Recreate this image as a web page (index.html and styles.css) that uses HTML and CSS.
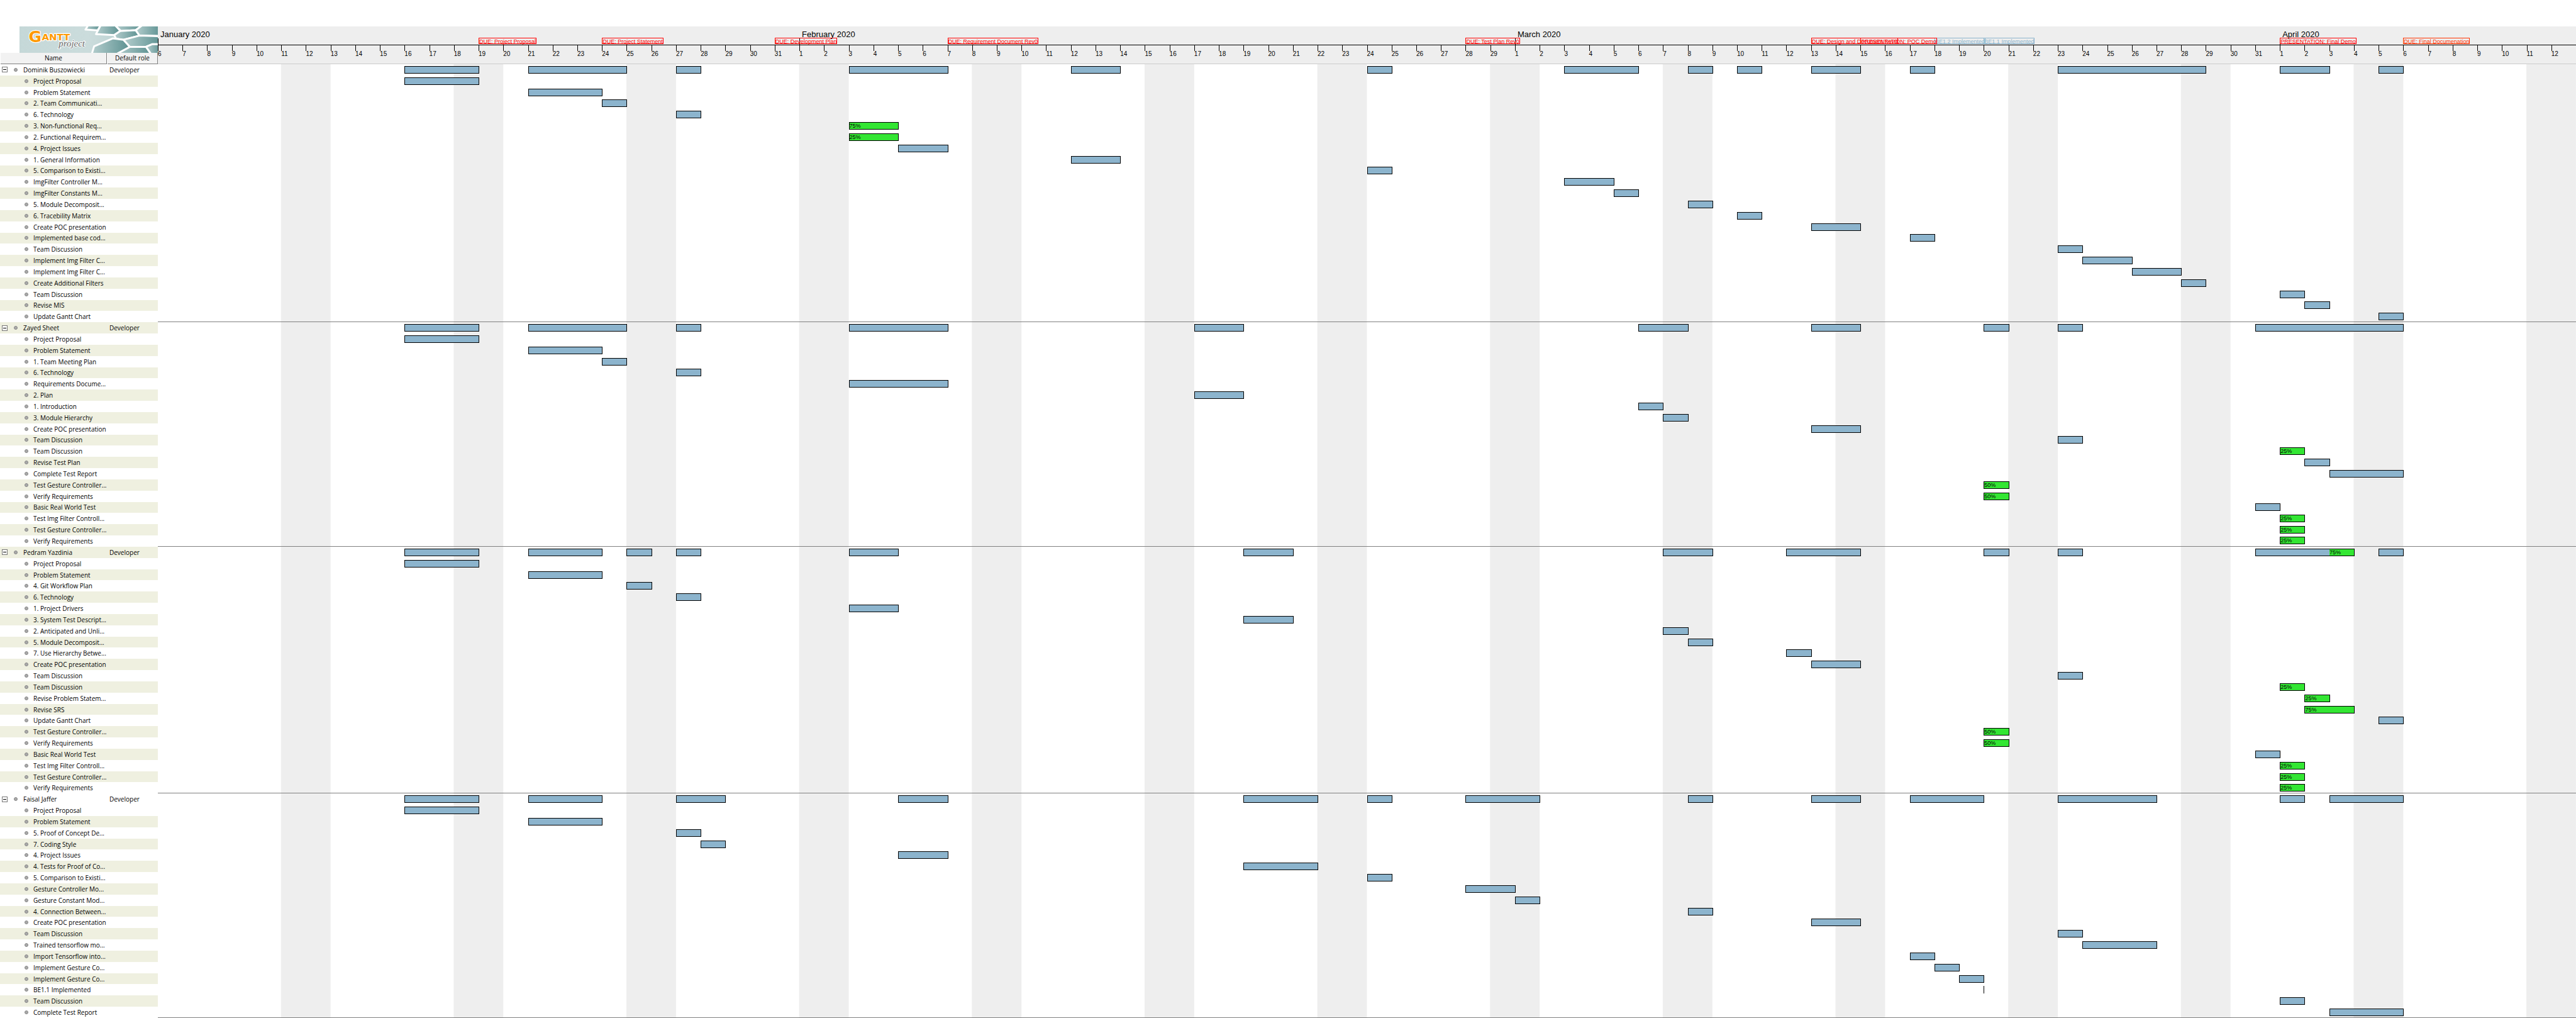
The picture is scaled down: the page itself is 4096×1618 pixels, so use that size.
FILE: index.html
```html
<!DOCTYPE html>
<html lang="en">
<head>
<meta charset="utf-8">
<title>GanttProject - Resources Chart</title>
<link rel="stylesheet" href="styles.css">
</head>
<body>
<table class="chart">
  <thead class="head">
    <tr class="head-row">
      <th class="brand" colspan="2" scope="colgroup">
        <svg class="logo" viewBox="15 21 738 141" preserveAspectRatio="none" role="img" aria-label="GanttProject">
          <defs>
            <linearGradient id="sky" x1="0" y1="0" x2="1" y2="0">
              <stop offset="0" stop-color="#c5d8d8"/>
              <stop offset="0.5" stop-color="#cbdcdc"/>
              <stop offset="1" stop-color="#b0caca"/>
            </linearGradient>
            <linearGradient id="cell" x1="0" y1="0" x2="1" y2="0">
              <stop offset="0" stop-color="#b4cdcd"/>
              <stop offset="1" stop-color="#5c9191"/>
            </linearGradient>
          </defs>
          <rect x="15" y="21" width="738" height="141" fill="url(#sky)"/>
          <g fill="url(#cell)" stroke="#fff" stroke-width="10" stroke-linejoin="round">
            <path d="M382 13L367 38L432 42L449 13Z"/>
            <path d="M449 13L423 62L520 67L553 45L524 13Z"/>
            <path d="M524 13L555 45L635 41L672 13Z"/>
            <path d="M520 67L553 45L635 41L655 70L570 92L530 86Z"/>
            <path d="M635 41L672 13L770 13L770 72L655 70Z"/>
            <path d="M413 127L512 85L570 92L604 130L530 170L400 170Z"/>
            <path d="M570 92L655 70L770 74L770 116L722 116L690 130L604 130Z"/>
            <path d="M530 170L604 130L690 130L718 170Z"/>
            <path d="M690 130L722 116L770 116L770 170L718 170Z"/>
          </g>
          <g class="logo-word">
            <text class="logo-initial" x="64" y="106">G</text>
            <text class="logo-rest" x="134" y="95">ANTT</text>
          </g>
          <text class="logo-sub" x="224" y="127">project</text>
        </svg>
      </th>
      <th class="timeline-head" rowspan="2" scope="col">
        <div class="scale" id="scale"></div>
      </th>
    </tr>
    <tr class="head-row">
      <th class="col-head col-name" scope="col">Name</th>
      <th class="col-head col-role" scope="col">Default role</th>
    </tr>
  </thead>
  <tbody class="rows" id="rows"></tbody>
</table>
<script src="chart.js"></script>
</body>
</html>
```
FILE: styles.css
```css
* {
  box-sizing: border-box;
}

body {
  margin: 0;
  background: #fff;
  color: #000;
  font-family: "Open Sans", "Noto Sans", sans-serif;
  font-size: 10px;
  line-height: 16px;
}

.chart {
  display: grid;
  grid-template-columns: 170px 81px minmax(0, 1fr);
  grid-template-rows: auto 1fr;
  min-height: 100vh;
  padding-top: 42px;
}

/* ---- header ---- */

.head {
  display: grid;
  grid-column: 1 / -1;
  grid-template-columns: subgrid;
  grid-template-rows: 42px 18px;
}

.head-row {
  display: contents;
}

th,
td {
  padding: 0;
  font-weight: normal;
  text-align: left;
}

.brand {
  display: flex;
  grid-column: 1 / 3;
  padding-left: 31px;
}

.logo {
  width: 100%;
  height: 42px;
}

.logo-word {
  fill: #ff9900;
  stroke: #fff;
  stroke-width: 8px;
  stroke-linejoin: round;
  paint-order: stroke;
  font-family: "DejaVu Sans", sans-serif;
  font-weight: bold;
}

.logo-initial {
  font-size: 84px;
}

.logo-rest {
  font-size: 50px;
}

.logo-sub {
  fill: #666;
  stroke: #fff;
  stroke-width: 6px;
  paint-order: stroke;
  font-family: "Liberation Serif", serif;
  font-size: 50px;
  font-style: italic;
}

.col-head {
  grid-row: 2;
  background: #f2f2f2;
  border-right: 1px solid #7f7f7f;
  border-bottom: 1px solid #7f7f7f;
  margin-left: 1px;
  text-align: center;
}

.timeline-head {
  grid-row: 1 / 3;
  grid-column: 3;
  background: #eee;
  border-bottom: 1px solid #ccc;
  font-family: "Liberation Sans", Arial, sans-serif;
}

.scale {
  display: grid;
  grid-template-columns: repeat(98, minmax(0, 1fr));
  grid-template-rows: 18px 2px 10px 29px;
}

.month {
  grid-row: 1;
  padding: 5px 0 0 4px;
  font-size: 13px;
  white-space: nowrap;
}

.month-tick {
  grid-row: 3;
  border-left: 1px solid #000;
  margin-top: -1px;
}

.due {
  grid-row: 2 / 4;
  justify-self: start;
  height: 10px;
  border: 1px solid currentColor;
  margin-top: 0;
  color: #f00;
  font-size: 9px;
  line-height: 10px;
  white-space: nowrap;
}

.due-task {
  color: #8cb4cd;
}

.due-final {
  color: #ff3300;
}

.axis {
  grid-row: 3;
  grid-column: 1 / -1;
  align-self: end;
  height: 1px;
  background: #000;
}

.day {
  grid-row: 4;
  font-size: 10px;
  line-height: 10px;
  text-indent: 2px;
}

.day::before {
  content: "";
  display: block;
  width: 1px;
  height: 9px;
  background: #000;
}

/* ---- rows ---- */

.rows {
  display: grid;
  grid-column: 1 / -1;
  grid-template-columns: subgrid;
  grid-auto-rows: minmax(17px, 1fr);
}

.row {
  display: grid;
  grid-column: 1 / -1;
  grid-template-columns: subgrid;
}

.name,
.role {
  display: flex;
  align-items: center;
  white-space: nowrap;
}

.striped .name,
.striped .role {
  background: #eff0e0;
}

.name {
  gap: 8px;
  padding-left: 39px;
}

.person .name {
  gap: 9px;
  padding-left: 3px;
}

.role {
  padding-left: 4px;
}

.toggle {
  display: flex;
  align-items: center;
  justify-content: center;
  width: 9px;
  height: 9px;
  margin-right: 1px;
  padding: 0;
  border: 1px solid #777;
  background: #fff;
}

.toggle::before {
  content: "";
  width: 5px;
  height: 1px;
  background: #000;
}

.dot {
  width: 6px;
  height: 6px;
  border: 1px solid #888;
  border-radius: 50%;
  background: #aaa;
}

.track {
  display: grid;
  grid-template-columns: repeat(98, minmax(0, 1fr));
  align-items: center;
  background: linear-gradient(to right, transparent calc(500% / 7), #eee calc(500% / 7)) 0 0 / calc(100% / 14) 100%;
}

.group-end .track {
  border-bottom: 1px solid #808080;
}

.bar {
  display: flex;
  grid-row: 1;
  height: 12px;
  margin-right: -1px;
  border: 1px solid #000;
  background: #8cb4cd;
  font-family: "Liberation Sans", Arial, sans-serif;
  font-size: 9px;
  line-height: 10px;
}

.bar-done {
  background: #33e633;
}

.bar-part {
  margin-left: auto;
  background: #33e633;
}

.bar-point {
  justify-self: start;
  width: 1px;
  border-width: 0 0 0 1px;
}
```
FILE: chart.js
```js
// Day 0 is 6 January 2020; every span is [first day, day after the last].
const months = [
  { name: "January 2020", start: 0, first: 6, last: 31 },
  { name: "February 2020", start: 26, first: 1, last: 29 },
  { name: "March 2020", start: 55, first: 1, last: 31 },
  { name: "April 2020", start: 86, first: 1, last: 12 }
];

const deadlines = [
  [13, "DUE: Project Proposal"],
  [18, "DUE: Project Statement"],
  [25, "DUE: Development Plan"],
  [32, "DUE: Requirement Document Rev0"],
  [53, "DUE: Test Plan Rev0"],
  [67, "DUE: Design and Document Rev0"],
  [72, "BE1.2 Implemented", "due-task"],
  [74, "BE1.1 Implemented", "due-task"],
  [69, "PRESENTATION: POC Demo"],
  [86, "PRESENTATION: Final Demo"],
  [91, "DUE: Final Documenation", "due-final"]
];

const people = [
  {
    name: "Dominik Buszowiecki",
    spans: [[10, 13], [15, 19], [21, 22], [28, 32], [37, 39], [49, 50], [57, 60], [62, 63], [64, 65], [67, 69], [71, 72], [77, 83], [86, 88], [90, 91]],
    tasks: [
      ["Project Proposal", 10, 13],
      ["Problem Statement", 15, 18],
      ["2. Team Communicati...", 18, 19],
      ["6. Technology", 21, 22],
      ["3. Non-functional Req...", 28, 30, "75%"],
      ["2. Functional Requirem...", 28, 30, "25%"],
      ["4. Project Issues", 30, 32],
      ["1. General Information", 37, 39],
      ["5. Comparison to Existi...", 49, 50],
      ["ImgFilter Controller M...", 57, 59],
      ["ImgFilter Constants M...", 59, 60],
      ["5. Module Decomposit...", 62, 63],
      ["6. Tracebility Matrix", 64, 65],
      ["Create POC presentation", 67, 69],
      ["Implemented base cod...", 71, 72],
      ["Team Discussion", 77, 78],
      ["Implement Img Filter C...", 78, 80],
      ["Implement Img Filter C...", 80, 82],
      ["Create Additional Filters", 82, 83],
      ["Team Discussion", 86, 87],
      ["Revise MIS", 87, 88],
      ["Update Gantt Chart", 90, 91]
    ]
  },
  {
    name: "Zayed Sheet",
    spans: [[10, 13], [15, 19], [21, 22], [28, 32], [42, 44], [60, 62], [67, 69], [74, 75], [77, 78], [85, 91]],
    tasks: [
      ["Project Proposal", 10, 13],
      ["Problem Statement", 15, 18],
      ["1. Team Meeting Plan", 18, 19],
      ["6. Technology", 21, 22],
      ["Requirements Docume...", 28, 32],
      ["2. Plan", 42, 44],
      ["1. Introduction", 60, 61],
      ["3. Module Hierarchy", 61, 62],
      ["Create POC presentation", 67, 69],
      ["Team Discussion", 77, 78],
      ["Team Discussion", 86, 87, "25%"],
      ["Revise Test Plan", 87, 88],
      ["Complete Test Report", 88, 91],
      ["Test Gesture Controller...", 74, 75, "50%"],
      ["Verify Requirements", 74, 75, "50%"],
      ["Basic Real World Test", 85, 86],
      ["Test Img Filter Controll...", 86, 87, "25%"],
      ["Test Gesture Controller...", 86, 87, "25%"],
      ["Verify Requirements", 86, 87, "25%"]
    ]
  },
  {
    name: "Pedram Yazdinia",
    spans: [[10, 13], [15, 18], [19, 20], [21, 22], [28, 30], [44, 46], [61, 63], [66, 69], [74, 75], [77, 78], [85, 89, "75%", 88], [90, 91]],
    tasks: [
      ["Project Proposal", 10, 13],
      ["Problem Statement", 15, 18],
      ["4. Git Workflow Plan", 19, 20],
      ["6. Technology", 21, 22],
      ["1. Project Drivers", 28, 30],
      ["3. System Test Descript...", 44, 46],
      ["2. Anticipated and Unli...", 61, 62],
      ["5. Module Decomposit...", 62, 63],
      ["7. Use Hierarchy Betwe...", 66, 67],
      ["Create POC presentation", 67, 69],
      ["Team Discussion", 77, 78],
      ["Team Discussion", 86, 87, "25%"],
      ["Revise Problem Statem...", 87, 88, "25%"],
      ["Revise SRS", 87, 89, "75%"],
      ["Update Gantt Chart", 90, 91],
      ["Test Gesture Controller...", 74, 75, "50%"],
      ["Verify Requirements", 74, 75, "50%"],
      ["Basic Real World Test", 85, 86],
      ["Test Img Filter Controll...", 86, 87, "25%"],
      ["Test Gesture Controller...", 86, 87, "25%"],
      ["Verify Requirements", 86, 87, "25%"]
    ]
  },
  {
    name: "Faisal Jaffer",
    plain: true,
    spans: [[10, 13], [15, 18], [21, 23], [30, 32], [44, 47], [49, 50], [53, 56], [62, 63], [67, 69], [71, 74], [77, 81], [86, 87], [88, 91]],
    tasks: [
      ["Project Proposal", 10, 13],
      ["Problem Statement", 15, 18],
      ["5. Proof of Concept De...", 21, 22],
      ["7. Coding Style", 22, 23],
      ["4. Project Issues", 30, 32],
      ["4. Tests for Proof of Co...", 44, 47],
      ["5. Comparison to Existi...", 49, 50],
      ["Gesture Controller Mo...", 53, 55],
      ["Gesture Constant Mod...", 55, 56],
      ["4. Connection Between...", 62, 63],
      ["Create POC presentation", 67, 69],
      ["Team Discussion", 77, 78],
      ["Trained tensorflow mo...", 78, 81],
      ["Import Tensorflow into...", 71, 72],
      ["Implement Gesture Co...", 72, 73],
      ["Implement Gesture Co...", 73, 74],
      ["BE1.1 Implemented", 74, 74],
      ["Team Discussion", 86, 87],
      ["Complete Test Report", 88, 91]
    ]
  }
];

function cell(className, column, text) {
  return `<div class="${className}" style="grid-column:${column}">${text}</div>`;
}

function drawScale() {
  let html = "";
  for (const m of months) {
    const end = m.start + m.last - m.first + 1;
    html += cell("month", `${m.start + 1} / ${end + 1}`, m.name);
    html += cell("month-tick", m.start + 1, "");
    for (let d = m.first; d <= m.last; d++) {
      html += cell("day", m.start + d - m.first + 1, d);
    }
  }
  for (const [day, text, kind] of deadlines) {
    html += cell(`due ${kind || ""}`, `${day + 1} / -1`, text);
  }
  html += '<div class="axis"></div>';
  document.getElementById("scale").innerHTML = html;
}

function bar([start, end, done, doneFrom]) {
  if (start === end) return cell("bar bar-point", start + 1, "");
  const column = `${start + 1} / ${end + 1}`;
  if (doneFrom) {
    const share = 100 * (end - doneFrom) / (end - start);
    return cell("bar", column, `<span class="bar-part" style="width:${share}%">${done}</span>`);
  }
  return cell(done ? "bar bar-done" : "bar", column, done || "");
}

function row(classes, lead, name, role, spans) {
  return `<tr class="row ${classes.filter(Boolean).join(" ")}">
    <td class="name">${lead}<span class="dot"></span><span>${name}</span></td>
    <td class="role">${role}</td>
    <td class="track">${spans.map(bar).join("")}</td>
  </tr>`;
}

function drawRows() {
  let html = "";
  let index = 0;
  for (const p of people) {
    const toggle = `<button class="toggle" type="button" aria-label="Collapse ${p.name}"></button>`;
    html += row(["person", index++ % 2 && !p.plain && "striped"], toggle, p.name, "Developer", p.spans);
    p.tasks.forEach(([name, ...span], i) => {
      const last = i === p.tasks.length - 1;
      html += row([index++ % 2 && "striped", last && "group-end"], "", name, "", [span]);
    });
  }
  document.getElementById("rows").innerHTML = html;
}

drawScale();
drawRows();
```
